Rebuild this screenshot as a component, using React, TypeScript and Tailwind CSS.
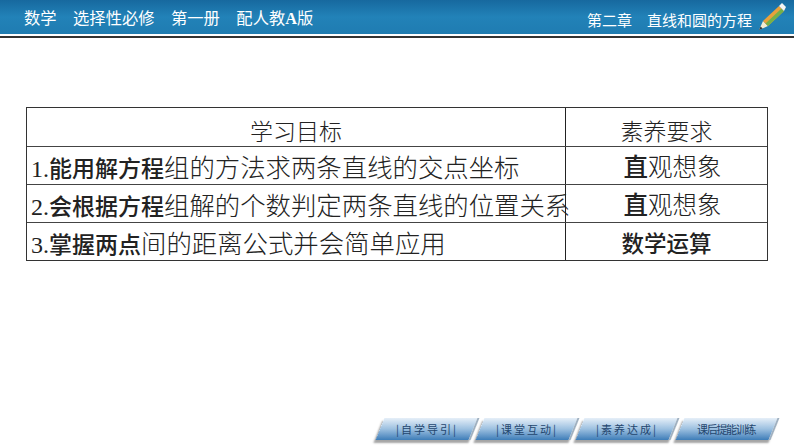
import React from 'react'

const SERIF = "font-['Liberation_Serif','Noto_Sans_CJK_SC',serif]"

type Row = { id: string; strong: string; rest: string; need: string; needStrong?: boolean }

const ROWS: Row[] = [
  { id: '1.', strong: '能用解方程', rest: '组的方法求两条直线的交点坐标', need: '观想象' },
  { id: '2.', strong: '会根据方程', rest: '组解的个数判定两条直线的位置关系', need: '观想象' },
  { id: '3.', strong: '掌握两点', rest: '间的距离公式并会简单应用', need: '数学运算', needStrong: true },
]

const NAV = ['|自学导引|', '|课堂互动|', '|素养达成|', '课后提能训练']

const Pencil = () => (
  <svg width="28" height="30" viewBox="0 0 28 30" className="shrink-0">
    <path d="M1 28 L5 19 L10 24 Z" fill="#f3ead2" />
    <path d="M1 28 L2.6 24.4 L4.6 26.6 Z" fill="#333" />
    <path d="M5 19 L21 4 L26 9 L10 24 Z" fill="#e9a13b" />
    <path d="M7.5 21.5 L23.5 6.5 L26 9 L10 24 Z" fill="#74b148" />
    <path d="M21 4 L24 1 L28 5 L26 9 Z" fill="#f4f4f4" />
  </svg>
)

export default function App() {
  return (
    <div className="flex h-[447px] w-[794px] flex-col overflow-hidden bg-white">
      <header className="h-[38px] shrink-0 border-b-2 border-[#333] bg-white">
        <div className="flex h-[34px] items-center justify-between bg-gradient-to-b from-[#17699f] via-[#2282b8] to-[#1f7cb1] pl-[24px] pr-[8px] text-white">
          <div className="flex gap-[16.5px] pt-[4px] font-['Liberation_Serif','Noto_Sans_CJK_SC',serif] text-[16.3px] leading-none">
            <span>数学</span>
            <span>选择性必修</span>
            <span>第一册</span>
            <span>配人教<b>A</b>版</span>
          </div>
          <div className="flex items-center">
            <div className="flex gap-[15px] pt-[5px] font-['Noto_Sans_CJK_SC',sans-serif] text-[15px] leading-none">
              <span>第二章</span>
              <span>直线和圆的方程</span>
            </div>
            <div className="ml-[6px]">
              <Pencil />
            </div>
          </div>
        </div>
      </header>

      <main className="flex-1 px-[26px] pt-[69px]">
        <div className={`w-[742px] border border-[#333] text-[#222] ${SERIF}`}>
          <div className="flex h-[38px] text-[23px]">
            <div className="w-[538px] shrink-0 pt-[10px] text-center font-light leading-[30px]">学习目标</div>
            <div className="flex-1 border-l border-[#222] pt-[10px] text-center font-light leading-[30px]">素养要求</div>
          </div>
          {ROWS.map((row) => (
            <div key={row.id} className="flex h-[38px] border-t border-[#444]">
              <div className="w-[538px] shrink-0 whitespace-nowrap pl-[4px] pt-[3px] text-[25.4px] leading-[36px]">
                <span className="font-['Liberation_Serif',serif] text-[24px]">{row.id}</span>
                <span className="text-[23px] font-medium">{row.strong}</span>
                <span className="font-light">{row.rest}</span>
              </div>
              <div className="flex-1 border-l border-[#222] pt-[3px] text-center text-[24.5px] leading-[36px]">
                {row.needStrong ? (
                  <span className="text-[22.5px] font-medium">{row.need}</span>
                ) : (
                  <span className="pl-[12px]">
                    <span className="font-medium">直</span>
                    <span className="font-light">{row.need}</span>
                  </span>
                )}
              </div>
            </div>
          ))}
        </div>
      </main>

      <footer className="flex h-[29px] shrink-0 justify-end pb-[5px] pr-[19px]">
        <div className="flex gap-[5px]">
          {NAV.map((label, i) => (
            <div
              key={label}
              className="flex h-[22px] w-[95px] -skew-x-[22deg] items-center justify-center border-r-2 border-[#9fb0c0] bg-gradient-to-b from-[#e6eff8] via-[#9cc0e0] to-[#3d7db8] shadow-[-1px_3px_2px_#a5a5a5]"
            >
              <span
                className={`skew-x-[22deg] whitespace-nowrap pt-[1px] font-['Noto_Sans_CJK_SC',sans-serif] leading-none text-[#24466e] ${
                  i < 3 ? 'text-[11px] tracking-[2px]' : 'text-[11px] tracking-[-1.3px]'
                }`}
              >
                {label}
              </span>
            </div>
          ))}
        </div>
      </footer>
    </div>
  )
}
